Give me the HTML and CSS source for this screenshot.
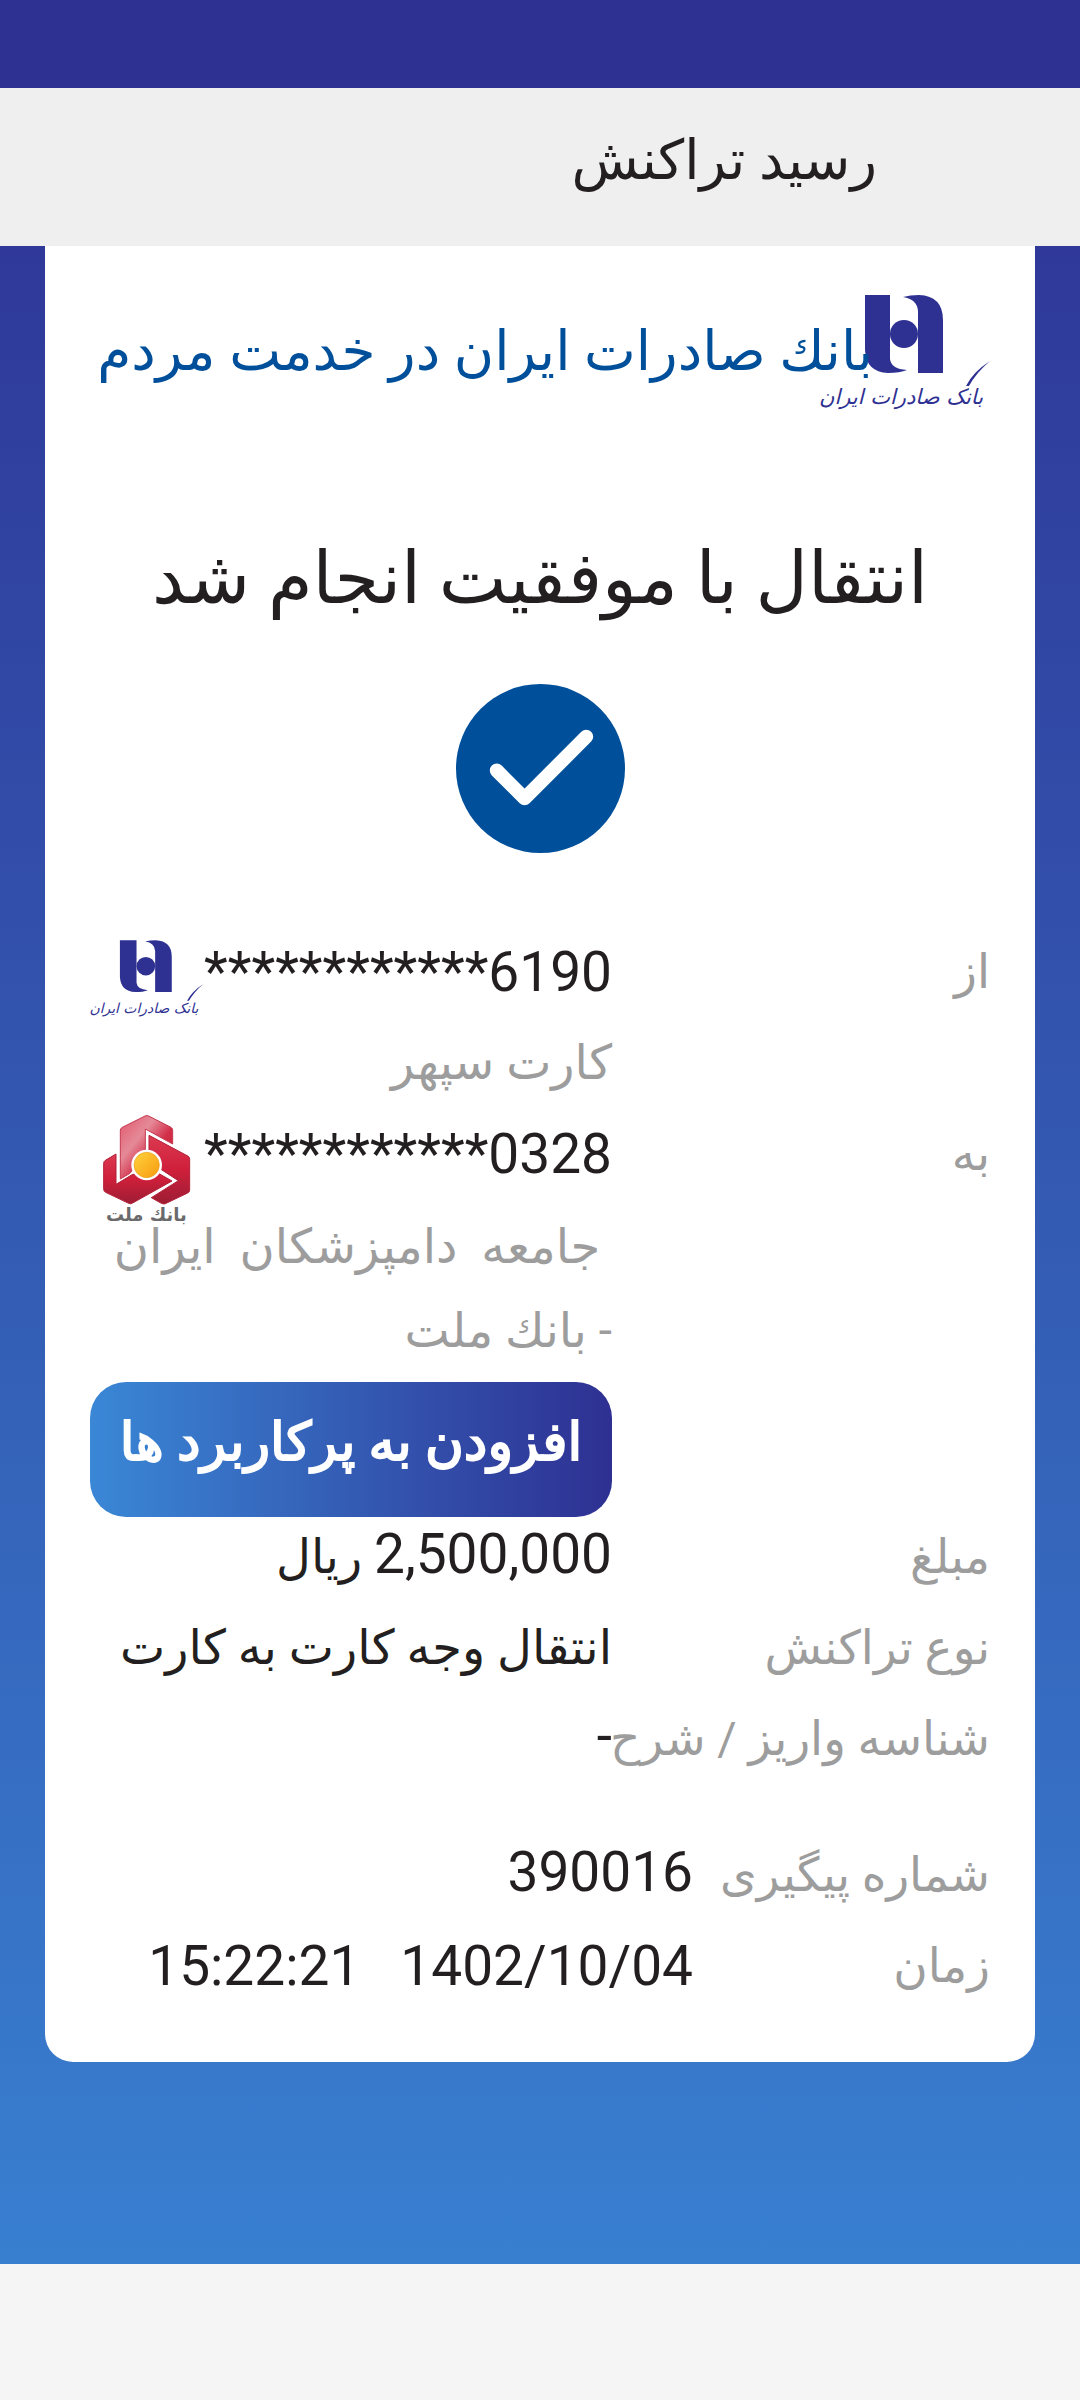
FILE: index.html
```html
<!DOCTYPE html>
<html lang="fa" dir="rtl">
<head>
    <meta charset="UTF-8" />
    <meta name="viewport" content="width=device-width, initial-scale=1.0"/>
    <title>رسید تراکنش</title>
    <link rel="stylesheet" href="styles.css">
</head>
<body>

<div class="status-bar"></div>

<header class="toolbar">
    <h1>رسید تراکنش</h1>
</header>

<main class="page">
    <div class="card">

        <div class="brand">
            <!-- The emblem is used again in the source card row -->
            <svg class="brand-logo" viewBox="0 -12 170 136" role="img" aria-label="بانک صادرات ایران">
                <g id="saderat" fill="#2e3192">
                    <path d="M45 0H70V64Q71 74 87 75Q80 78 68 78Q46 77 45 55z"/>
                    <path d="M83 2Q90 0 99 0Q123 1 123 25V78H98V16Q97 4 83 2z"/>
                    <circle cx="84" cy="39" r="14"/>
                    <text class="logo-text" x="81" y="109" text-anchor="middle">بانک صادرات ایران</text>
                    <path d="M146 91Q153 77 170 66Q156 78 149 91z"/>
                </g>
            </svg>
            <p class="slogan">بانك صادرات ایران در خدمت مردم</p>
        </div>

        <h2>انتقال با موفقیت انجام شد</h2>

        <svg class="check" viewBox="0 0 170 170" aria-hidden="true">
            <circle cx="85" cy="85" r="85" fill="#004f9a"/>
            <path d="M41 87l28 28 62-62" fill="none" stroke="#fff" stroke-width="14" stroke-linecap="round" stroke-linejoin="round"/>
        </svg>

        <!-- Transfer details -->
        <dl class="details">
            <dt>از</dt>
            <dd>
                <div class="account">
                    <span class="number" dir="ltr">************6190</span>
                    <svg class="bank-logo" viewBox="0 -12 170 136" role="img" aria-label="بانک صادرات ایران"><use href="#saderat"/></svg>
                </div>
                <p class="owner">کارت سپهر</p>
            </dd>

            <dt>به</dt>
            <dd class="with-action">
                <div class="account">
                    <span class="number" dir="ltr">************0328</span>
                    <svg class="bank-logo mellat" viewBox="30 42 339 339" role="img" aria-label="بانك ملت">
                        <defs>
                            <linearGradient id="top" x1="0" y1="0" x2="1" y2="1">
                                <stop offset="0" stop-color="#e0566b"/>
                                <stop offset=".35" stop-color="#e58a98"/>
                                <stop offset=".6" stop-color="#d22e48"/>
                                <stop offset="1" stop-color="#c8203c"/>
                            </linearGradient>
                            <linearGradient id="side" x1="0" y1="0" x2="0" y2="1">
                                <stop offset="0" stop-color="#dc3a50"/>
                                <stop offset=".5" stop-color="#cf1f3b"/>
                                <stop offset="1" stop-color="#9c1d33"/>
                            </linearGradient>
                            <linearGradient id="sun" x1="0" y1="0" x2="1" y2="1">
                                <stop offset="0" stop-color="#ffd23c"/>
                                <stop offset="1" stop-color="#f79a10"/>
                            </linearGradient>
                        </defs>
                        <g stroke-linejoin="round" stroke-width="3">
                            <path d="M121 90Q121 85 127 82L195 48Q200 45 206 48L273 82Q278 85 278 91V132L196 87V158L150 220L121 237z" fill="url(#top)" stroke="#c43a50"/>
                            <path d="M207 106L325 169Q329 172 329 178V270Q329 276 323 279L256 311Q250 313 244 310L214 293L295 242L240 206L207 158z" fill="url(#side)" stroke="#b32039"/>
                            <path d="M71 190Q71 184 76 181L108 162V253L158 223L232 218L276 243L158 309Q152 313 146 310L77 277Q71 274 71 268z" fill="url(#side)" stroke="#b32039"/>
                        </g>
                        <circle cx="200" cy="195" r="46" fill="#fff"/>
                        <circle cx="200" cy="195" r="38" fill="url(#sun)" stroke="#e8a020" stroke-width="2"/>
                        <text class="mellat-text" x="199" y="362" text-anchor="middle">بانك ملت</text>
                    </svg>
                </div>
                <p class="owner">&nbsp;جامعه&nbsp; دامپزشکان&nbsp; ایران<br>- بانك ملت</p>
                <button type="button" class="favorite">افزودن به پرکاربرد ها</button>
            </dd>

            <dt>مبلغ</dt>
            <dd><span class="number">2,500,000</span> ریال</dd>

            <dt>نوع تراکنش</dt>
            <dd>انتقال وجه کارت به کارت</dd>

            <dt>شناسه واریز / شرح</dt>
            <dd><span class="number">-</span></dd>
        </dl>

        <!-- Tracking number and time -->
        <dl class="details tracking">
            <dt>شماره پیگیری</dt>
            <dd><span class="number">390016</span></dd>

            <dt>زمان</dt>
            <dd class="time">
                <span class="number">1402/10/04</span>
                <span class="number">15:22:21</span>
            </dd>
        </dl>
    </div>
</main>

<footer class="nav-bar"></footer>

</body>
</html>
```
FILE: styles.css
```css
* {
    box-sizing: border-box;
}

body {
    margin: 0;
    min-height: 100vh;
    display: flex;
    flex-direction: column;
    font-family: Roboto, "DejaVu Sans", sans-serif;
    font-size: 48px;
    color: #231f20;
    background: linear-gradient(#2e3092, #3984d4);
}

h1, h2, p, dl, dd {
    margin: 0;
    font-weight: normal;
}

.status-bar {
    height: 88px;
    background: #2e3092;
}

.toolbar {
    height: 158px;
    padding: 0 203px;
    background: #efefef;
}

.toolbar h1 {
    font-size: 55px;
    line-height: 144px;
}

/* Receipt card on the gradient */
.page {
    flex: 1;
    padding: 0 45px;
}

.card {
    padding: 37px 45px 45px;
    border-radius: 0 0 28px 28px;
    background: #fff;
}

.brand {
    display: flex;
    align-items: center;
}

.brand-logo {
    flex: none;
    width: 170px;
    height: 136px;
}

.logo-text {
    font: italic 21px "DejaVu Sans", sans-serif;
}

/* The slogan runs over the edge of the logo */
.slogan {
    flex: 1;
    margin-inline-start: -53px;
    font-size: 55px;
    line-height: 112px;
    white-space: nowrap;
    color: #004f9a;
    z-index: 1;
}

.card h2 {
    margin-top: 88px;
    font-size: 72px;
    line-height: 144px;
    text-align: center;
    white-space: nowrap;
}

.check {
    display: block;
    width: 169px;
    height: 169px;
    margin: 33px auto 79px;
}

/* Label / value rows */
.details {
    display: grid;
    grid-template-columns: 42% 58%;
    line-height: 80px;
}

.details dt {
    font-size: 47px;
    color: #9d9d9d;
    white-space: nowrap;
}

.details dd {
    min-width: 0;
    padding-bottom: 11px;
    white-space: nowrap;
}

.details .with-action {
    padding-bottom: 0;
}

.number {
    font-size: 55px;
    line-height: 55px;
}

.account {
    display: flex;
    justify-content: space-between;
    height: 91px;
}

.account .number,
.time .number {
    line-height: 80px;
}

.bank-logo {
    flex: none;
    width: 113px;
    height: 91px;
    margin-inline-start: -8px;
}

.mellat {
    height: 113px;
}

.mellat-text {
    font: bold 54px "DejaVu Sans", sans-serif;
    fill: #6a6a6c;
}

.owner {
    color: #9d9d9d;
}

.with-action .owner {
    line-height: 84px;
}

.favorite {
    display: block;
    width: 100%;
    height: 135px;
    margin-top: 9px;
    padding: 0 24px 16px;
    border: 0;
    border-radius: 36px;
    background: linear-gradient(to right, #3a87d6, #2e3092);
    color: #fff;
    font: 53px Roboto, "DejaVu Sans", sans-serif;
    -webkit-text-stroke: 2px #fff;
    white-space: nowrap;
}

.tracking {
    margin-top: 45px;
    grid-template-columns: 33% 67%;
}

.time {
    display: flex;
    gap: 40px;
}

.nav-bar {
    height: 136px;
    background: #f5f5f5;
}
```
